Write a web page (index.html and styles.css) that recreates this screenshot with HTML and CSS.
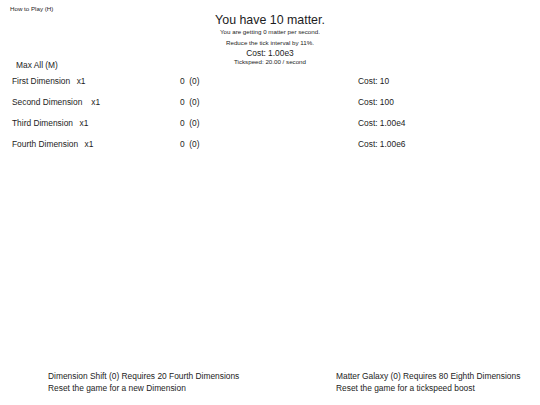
FILE: index.html
```html
<!DOCTYPE html>
<html>
<head>
<meta charset="utf-8">
<link rel="stylesheet" href="styles.css">
</head>
<body>
<div class="page">
  <header class="top">
    <div class="side">
      <div class="help">How to Play (H)</div>
      <div class="maxall">Max All (M)</div>
    </div>
    <div class="center">
      <div class="title">You have 10 matter.</div>
      <div class="small rate">You are getting 0 matter per second.</div>
      <div class="small reduce">Reduce the tick interval by 11%.</div>
      <div class="cost">Cost: 1.00e3</div>
      <div class="small tick">Tickspeed: 20.00 / second</div>
    </div>
    <div class="side"></div>
  </header>

  <section class="dims">
    <div class="dim">
      <div class="name">First Dimension<span class="mult">x1</span></div>
      <div class="amount">0 &nbsp;(0)</div>
      <div class="price">Cost: 10</div>
    </div>
    <div class="dim">
      <div class="name">Second Dimension<span class="mult wide">x1</span></div>
      <div class="amount">0 &nbsp;(0)</div>
      <div class="price">Cost: 100</div>
    </div>
    <div class="dim">
      <div class="name">Third Dimension<span class="mult">x1</span></div>
      <div class="amount">0 &nbsp;(0)</div>
      <div class="price">Cost: 1.00e4</div>
    </div>
    <div class="dim">
      <div class="name">Fourth Dimension<span class="mult">x1</span></div>
      <div class="amount">0 &nbsp;(0)</div>
      <div class="price">Cost: 1.00e6</div>
    </div>
  </section>

  <footer class="resets">
    <div class="reset left">
      <div>Dimension Shift (0) Requires 20 Fourth Dimensions</div>
      <div>Reset the game for a new Dimension</div>
    </div>
    <div class="reset right">
      <div>Matter Galaxy (0) Requires 80 Eighth Dimensions</div>
      <div>Reset the game for a tickspeed boost</div>
    </div>
  </footer>
</div>
</body>
</html>
```

FILE: styles.css
```css
html, body {
  margin: 0;
  padding: 0;
  background: #ffffff;
}

body {
  font-family: "Liberation Sans", Arial, sans-serif;
  color: #1c1c1c;
  font-size: 8.4px;
}

.page {
  width: 540px;
  height: 405px;
  display: flex;
  flex-direction: column;
  box-sizing: border-box;
}

.top {
  display: grid;
  grid-template-columns: 1fr auto 1fr;
  padding-bottom: 3px;
}

.side {
  display: flex;
  flex-direction: column;
  justify-content: space-between;
}

.help {
  font-size: 6.2px;
  line-height: 8px;
  padding: 5px 0 0 10px;
}

.maxall {
  line-height: 11px;
  padding-left: 16px;
  margin-bottom: -4.5px;
}

.center {
  text-align: center;
  padding-top: 12px;
}

.title {
  font-size: 12.4px;
  line-height: 16px;
}

.small {
  font-size: 6.2px;
  line-height: 8px;
}

.reduce {
  margin-top: 3px;
}

.cost {
  line-height: 10px;
  margin-top: 1px;
}

.dims {
  display: flex;
  flex-direction: column;
  padding-left: 12px;
  margin-top: 2px;
}

.dim {
  display: grid;
  grid-template-columns: 168px 178px auto;
  line-height: 21px;
}

.mult {
  margin-left: 6.5px;
}

.mult.wide {
  margin-left: 9px;
}

.resets {
  margin-top: auto;
  display: grid;
  grid-template-columns: 270px 270px;
  padding-bottom: 11px;
  line-height: 12px;
}

.reset.left {
  padding-left: 48px;
}

.reset.right {
  padding-left: 66px;
}
```
